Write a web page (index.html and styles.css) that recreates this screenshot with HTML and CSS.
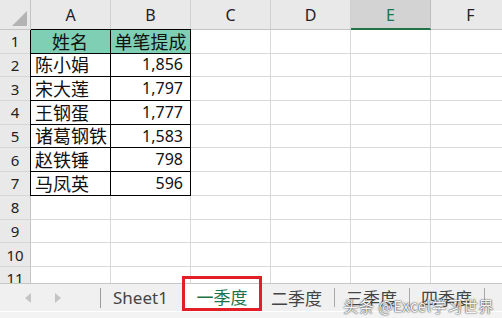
FILE: index.html
```html
<!DOCTYPE html>
<html lang="zh-CN">
<head>
    <meta charset="UTF-8">
    <meta name="viewport" content="width=device-width, initial-scale=1.0">
    <title>一季度</title>
    <link rel="stylesheet" href="styles.css">
</head>
<body>
    <div class="sheet">
        <!-- column headers -->
        <div class="corner"><span class="tri"></span></div>
        <div class="col-head">A</div>
        <div class="col-head">B</div>
        <div class="col-head">C</div>
        <div class="col-head">D</div>
        <div class="col-head active">E</div>
        <div class="col-head">F</div>

        <div class="row-head">1</div>
        <div class="cell data first-row first-col head-fill center">姓名</div>
        <div class="cell data first-row head-fill center">单笔提成</div>
        <div class="cell"></div><div class="cell"></div><div class="cell"></div><div class="cell"></div>

        <div class="row-head">2</div>
        <div class="cell data first-col">陈小娟</div>
        <div class="cell data num">1,856</div>
        <div class="cell"></div><div class="cell"></div><div class="cell"></div><div class="cell"></div>

        <div class="row-head">3</div>
        <div class="cell data first-col">宋大莲</div>
        <div class="cell data num">1,797</div>
        <div class="cell"></div><div class="cell"></div><div class="cell"></div><div class="cell"></div>

        <div class="row-head">4</div>
        <div class="cell data first-col">王钢蛋</div>
        <div class="cell data num">1,777</div>
        <div class="cell"></div><div class="cell"></div><div class="cell"></div><div class="cell"></div>

        <div class="row-head">5</div>
        <div class="cell data first-col">诸葛钢铁</div>
        <div class="cell data num">1,583</div>
        <div class="cell"></div><div class="cell"></div><div class="cell"></div><div class="cell"></div>

        <div class="row-head">6</div>
        <div class="cell data first-col">赵铁锤</div>
        <div class="cell data num">798</div>
        <div class="cell"></div><div class="cell"></div><div class="cell"></div><div class="cell"></div>

        <div class="row-head">7</div>
        <div class="cell data first-col">马凤英</div>
        <div class="cell data num">596</div>
        <div class="cell"></div><div class="cell"></div><div class="cell"></div><div class="cell"></div>

        <div class="row-head">8</div>
        <div class="cell"></div><div class="cell"></div><div class="cell"></div><div class="cell"></div><div class="cell"></div><div class="cell"></div>
        <div class="row-head">9</div>
        <div class="cell"></div><div class="cell"></div><div class="cell"></div><div class="cell"></div><div class="cell"></div><div class="cell"></div>
        <div class="row-head">10</div>
        <div class="cell"></div><div class="cell"></div><div class="cell"></div><div class="cell"></div><div class="cell"></div><div class="cell"></div>
        <div class="row-head">11</div>
        <div class="cell"></div><div class="cell"></div><div class="cell"></div><div class="cell"></div><div class="cell"></div><div class="cell"></div>
    </div>

    <div class="tabbar">
        <div class="nav">
            <span class="arrow left"></span>
            <span class="arrow right"></span>
        </div>
        <div class="tab">Sheet1</div>
        <div class="tab selected">一季度</div>
        <div class="tab">二季度</div>
        <div class="tab">三季度</div>
        <div class="tab">四季度</div>
        <div class="tab-end"></div>
        <div class="watermark">头条 @Excel学习世界</div>
    </div>
    <div class="statusbar"></div>
</body>
</html>
```

FILE: styles.css
```css
* {
    box-sizing: border-box;
}
html, body {
    margin: 0;
    height: 100%;
}
body {
    width: 502px;
    height: 318px;
    overflow: hidden;
    background-color: #fff;
    font-family: "Noto Sans", "Noto Sans CJK SC", sans-serif;
    color: #111;
    display: flex;
    flex-direction: column;
}

/* Grid */
.sheet {
    height: 283px;
    flex: none;
    overflow: hidden;
    display: grid;
    grid-template-columns: 31px repeat(6, 80px);
    grid-template-rows: 30px repeat(11, 23.7px);
    width: 511px;
}
.corner {
    background-color: #e9e9e9;
    border-right: 1px solid #c4c4c4;
    border-bottom: 1px solid #c4c4c4;
    position: relative;
}
.corner .tri {
    position: absolute;
    right: 3px;
    bottom: 3px;
    width: 0;
    height: 0;
    border-left: 15px solid transparent;
    border-bottom: 15px solid #b4b4b4;
}
.col-head {
    background-color: #e9e9e9;
    border-right: 1px solid #d0d0d0;
    border-bottom: 1px solid #c4c4c4;
    display: flex;
    align-items: center;
    justify-content: center;
    font-size: 16px;
    color: #222;
    padding-top: 1px;
}
.col-head.active {
    background-color: #d3d3d3;
    border-bottom: 2px solid #217346;
    border-right-color: #bdbdbd;
    color: #217346;
}
.row-head {
    background-color: #e9e9e9;
    border-right: 1px solid #c4c4c4;
    border-bottom: 1px solid #d6d6d6;
    display: flex;
    align-items: center;
    justify-content: center;
    font-size: 15px;
    color: #222;
}
.cell {
    border-right: 1px solid #d9d9d9;
    border-bottom: 1px solid #d9d9d9;
    display: flex;
    align-items: center;
    padding: 0 5px;
    font-size: 18px;
    line-height: 1.2;
    white-space: nowrap;
    font-family: "Noto Sans CJK SC", sans-serif;
}
.cell.data {
    border-right-color: #000;
    border-bottom-color: #000;
}
.cell.first-col {
    box-shadow: -1px 0 0 #000;
    padding-left: 4px;
}
.cell.first-row {
    box-shadow: 0 -1px 0 #000;
}
.cell.first-row.first-col {
    box-shadow: -1px 0 0 #000, 0 -1px 0 #000, -1px -1px 0 #000;
}
.head-fill {
    background-color: #7fcfb5;
}
.center {
    justify-content: center;
}
.num {
    justify-content: flex-end;
    font-family: "Noto Sans", sans-serif;
    font-size: 16px;
    padding-right: 7px;
}

/* Sheet tabs */
.tabbar {
    height: 28px;
    flex: none;
    background-color: #f0f0f0;
    border-top: 1px solid #c6c6c6;
    display: flex;
    align-items: stretch;
    position: relative;
}
.nav {
    width: 101px;
    border-right: 1px solid #9c9c9c;
    margin: 4px 0 3px;
    position: relative;
}
.arrow {
    position: absolute;
    top: 5px;
    width: 0;
    height: 0;
    border-top: 5px solid transparent;
    border-bottom: 5px solid transparent;
}
.arrow.left {
    left: 25px;
    border-right: 6px solid #c4c4c4;
}
.arrow.right {
    left: 55px;
    border-left: 6px solid #c4c4c4;
}
.tab {
    padding: 0 12px;
    display: flex;
    align-items: center;
    font-size: 17px;
    color: #444;
    font-family: "Noto Sans", "Noto Sans CJK SC", sans-serif;
    position: relative;
}
.tab + .tab::before,
.tab-end::before {
    content: "";
    position: absolute;
    left: 0;
    top: 4px;
    bottom: 4px;
    border-left: 1px solid #a8a8a8;
}
.tab.selected {
    background-color: #fff;
    color: #217346;
    border-bottom: 2px solid #217346;
    margin-bottom: 1px;
    margin-left: 4px;
    width: 76px;
    justify-content: center;
}
.tab.selected::before {
    display: none;
}
.tab.selected::after {
    content: "";
    position: absolute;
    left: -2px;
    right: -2px;
    top: -8px;
    bottom: -3px;
    border: 3px solid #e21f26;
}
.tab.selected + .tab {
    padding-left: 11px;
}
.tab.selected + .tab::before {
    display: none;
}
.tab-end {
    position: relative;
    width: 1px;
}
.watermark {
    position: absolute;
    right: 8px;
    bottom: -5px;
    font-family: "Noto Sans CJK SC", sans-serif;
    font-size: 15px;
    letter-spacing: 0.6px;
    color: #f4f4f4;
    text-shadow: 0 0 1px #333, 0 0 2px #555;
}
.statusbar {
    flex: 1;
    background-color: #f3f3f3;
    border-top: 1px solid #fff;
}
```
